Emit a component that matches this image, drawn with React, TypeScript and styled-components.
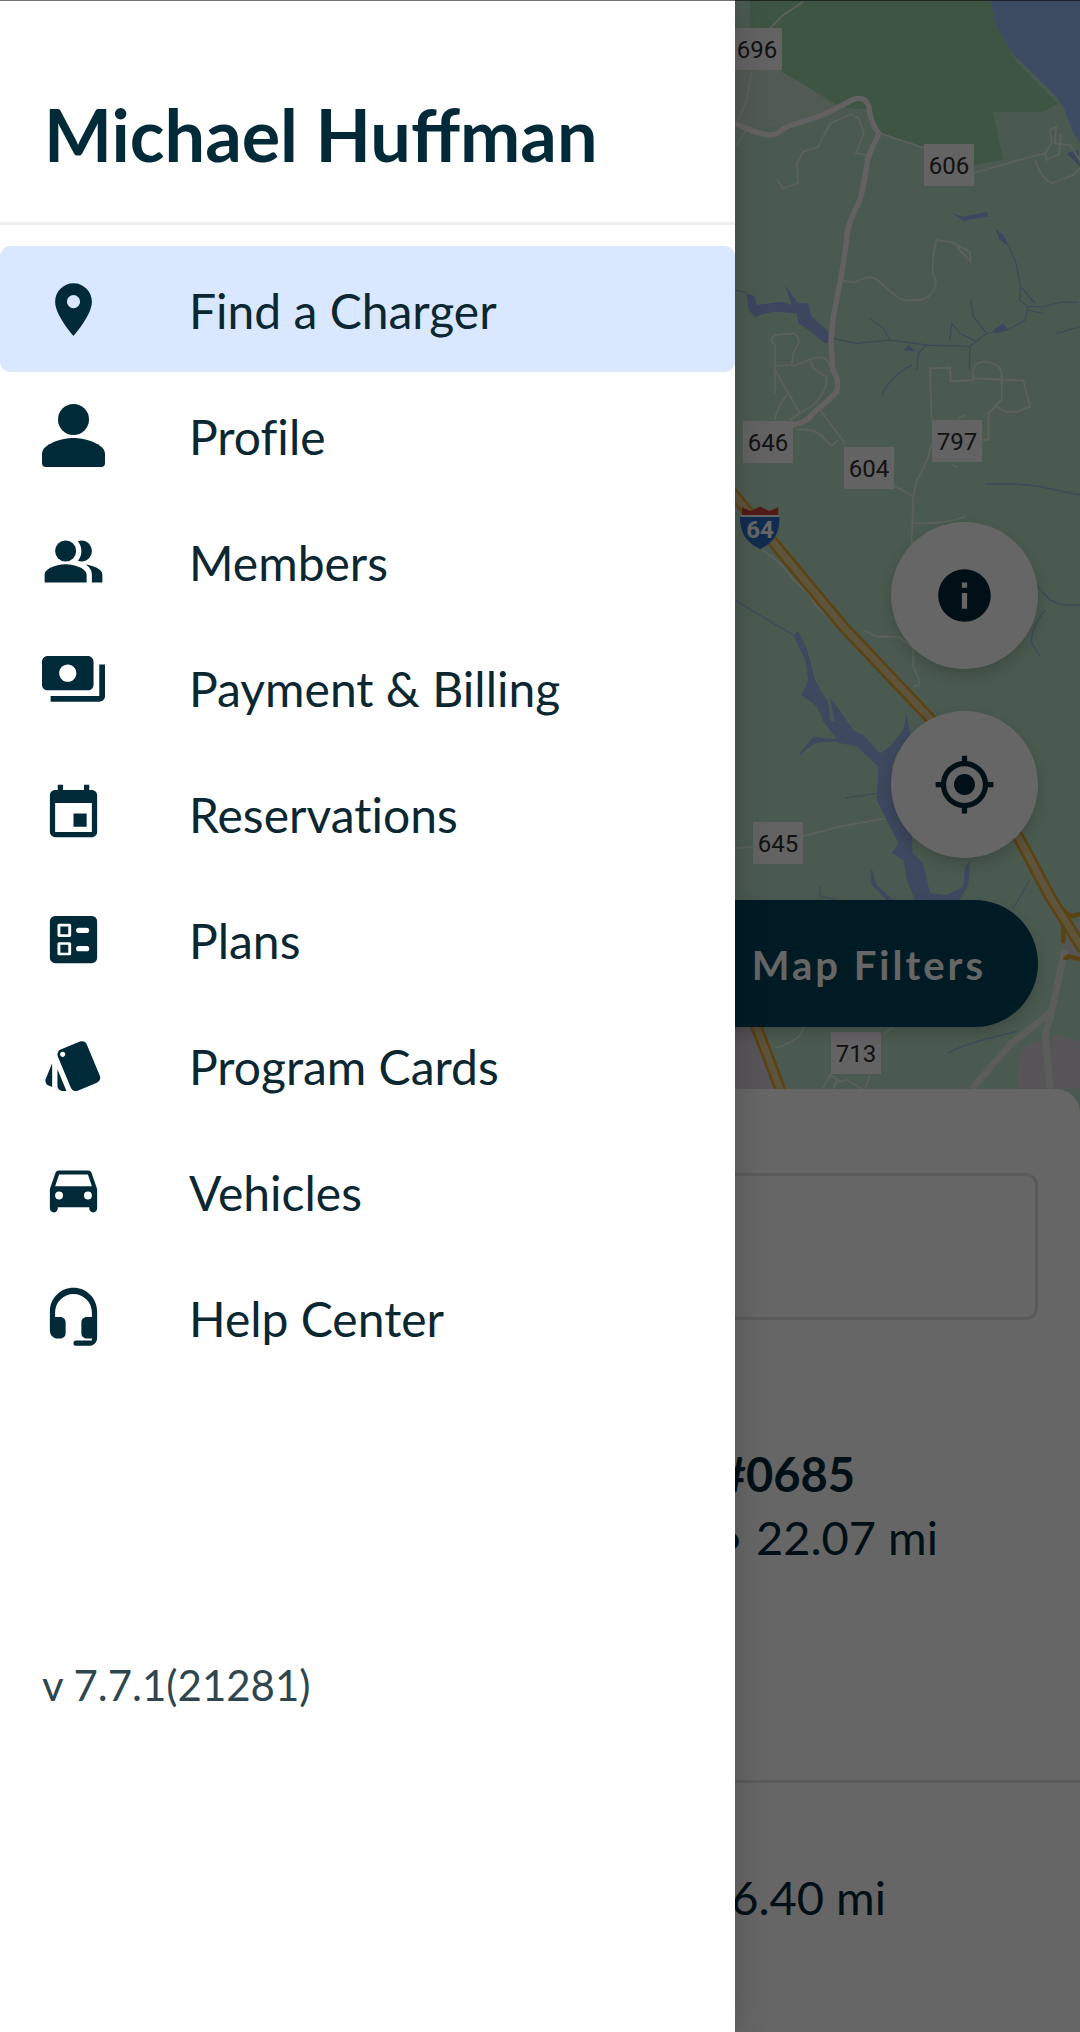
import React from "react";
import styled, { createGlobalStyle } from "styled-components";
import {
  MdEvent,
  MdInfo,
  MdMyLocation,
  MdPeopleAlt,
  MdPlace,
  MdStyle,
} from "react-icons/md";

interface menuItem {
  label: string;
  icon: React.ReactNode;
  active?: boolean;
}

interface roadLabelProps {
  x: number;
  y: number;
  text: string;
}

const PersonIcon: React.FC = () => (
  <svg viewBox="0 0 63 63" fill="currentColor">
    <circle cx="31.5" cy="15.5" r="15.5" />
    <path d="M31.5 34C21 34 0 39.5 0 50v9a4 4 0 0 0 4 4h55a4 4 0 0 0 4-4v-9c0-10.5-21-16-31.5-16z" />
  </svg>
);

const PaymentsIcon: React.FC = () => (
  <svg viewBox="1 4 22 22" fill="currentColor">
    <path d="M19 14V6c0-1.1-.9-2-2-2H3c-1.1 0-2 .9-2 2v8c0 1.1.9 2 2 2h14c1.1 0 2-.9 2-2zm-9-1c-1.66 0-3-1.34-3-3s1.34-3 3-3 3 1.34 3 3-1.34 3-3 3zm13-6v11c0 1.1-.9 2-2 2H4v-2h17V7h2z" />
  </svg>
);

const BallotIcon: React.FC = () => (
  <svg viewBox="0 0 24 24" fill="currentColor" fillRule="evenodd">
    <path d="M5 3h14a2 2 0 0 1 2 2v14a2 2 0 0 1-2 2H5a2 2 0 0 1-2-2V5a2 2 0 0 1 2-2zM14 7.500a1 1 0 0 0 0 2h3a1 1 0 0 0 0-2zM14 14.500a1 1 0 0 0 0 2h3a1 1 0 0 0 0-2zM6.500 6a.6.6 0 0 0-.6.6v3.800a.6.6 0 0 0 .6.6h4a.6.6 0 0 0 .6-.6V6.600a.6.6 0 0 0-.6-.6zM6.500 13a.6.6 0 0 0-.6.6v3.800a.6.6 0 0 0 .6.6h4a.6.6 0 0 0 .6-.6v-3.800a.6.6 0 0 0-.6-.6z" />
    <path d="M7 7h3v3H7zM7 14h3v3H7z" />
  </svg>
);

const CarIcon: React.FC = () => (
  <svg viewBox="0 0 24 24" fill="currentColor" fillRule="evenodd">
    <path d="M18.92 5.01C18.72 4.42 18.16 4 17.5 4h-11c-.66 0-1.21.42-1.42 1.01L3 11v7.5c0 .82.67 1.5 1.5 1.5S6 19.33 6 18.5V18h12v.5c0 .82.67 1.5 1.5 1.5s1.5-.68 1.5-1.5V11zM6.5 15a1.5 1.5 0 1 1 0-3 1.5 1.5 0 0 1 0 3zM17.5 15a1.5 1.5 0 1 1 0-3 1.5 1.5 0 0 1 0 3zM5 10l1.5-4.500h11L19 10z" />
  </svg>
);

const HeadsetIcon: React.FC = () => (
  <svg viewBox="0 0 24 24" fill="currentColor">
    <path d="M12 .7c-4.97 0-9 4.03-9 9V17c0 1.66 1.34 3 3 3h1c1.1 0 2-.9 2-2v-4.2c0-1.1-.9-2-2-2H5V10c0-3.870 3.130-7 7-7s7 3.130 7 7v1.8h-2c-1.1 0-2 .9-2 2V18c0 1.1.9 2 2 2h2v.8h-6a1 1 0 0 0 0 2h5c1.66 0 3-1.34 3-3V9.700c0-4.970-4.030-9-9-9z" />
  </svg>
);

const menu: menuItem[] = [
  { label: "Find a Charger", icon: <MdPlace />, active: true },
  { label: "Profile", icon: <PersonIcon /> },
  { label: "Members", icon: <MdPeopleAlt /> },
  { label: "Payment & Billing", icon: <PaymentsIcon /> },
  { label: "Reservations", icon: <MdEvent /> },
  { label: "Plans", icon: <BallotIcon /> },
  { label: "Program Cards", icon: <MdStyle /> },
  { label: "Vehicles", icon: <CarIcon /> },
  { label: "Help Center", icon: <HeadsetIcon /> },
];

const RoadLabel: React.FC<roadLabelProps> = ({ x, y, text }) => (
  <g>
    <rect x={x} y={y} width="50" height="42" fill="#fbf7fb" />
    <text
      x={x + 25}
      y={y + 30}
      textAnchor="middle"
      fontFamily="Roboto, sans-serif"
      fontSize="24"
      fill="#2e2e2e"
    >
      {text}
    </text>
  </g>
);

const AreaMap: React.FC = () => (
  <MapSvg viewBox="0 0 1080 1110" preserveAspectRatio="xMaxYMin slice">
    <rect width="1080" height="1110" fill="#bce2c8" />
    <g transform="translate(730 0) scale(.3333)" fill="none">
      {/* parks */}
      <path d="M0 100H155L240 265 320 325 200 370 60 390 0 370z" fill="#cbe2cf" />
      <path
        d="M60 0V90L155 215 240 265 330 320 420 330 447 398 580 440 700 500 820 480 790 335 940 335 985 312 860 185 800 80 780 0z"
        fill="#9ed5aa"
      />
      {/* water */}
      <path d="M780 0L800 80 850 165 960 270 1000 320 1030 400 1060 440V0z" fill="#9cbff8" />
      <path
        d="M50 880L75 890 80 915 155 905 185 915 165 855 205 910 235 910 245 950 290 990 305 1025 285 1030 235 990 205 970 200 940 130 935 75 950 55 930zM665 640L700 650 770 635 775 650 700 662zM795 685L820 705 838 740 810 720zM1010 460L1045 450 1050 500zM520 1050L538 1035 555 1055zM790 990L820 970 835 990 800 1000z"
        fill="#98b0ec"
      />
      <path
        d="M15 870L50 878M838 740L858 790 872 860 868 900 895 920 940 920 1000 905 1045 908M895 920L885 960 835 990 770 1000 730 950 722 900M872 860L915 910M890 930L940 940M770 1000L720 1040 590 1035 480 1020 380 1030 310 1015M480 1020L460 985 418 955M590 1035L565 1060 560 1110M720 1040L718 1110M660 1020L665 970 690 1000 740 1025M980 1000L1050 980"
        stroke="#9bb4d8"
        strokeWidth="4"
      />
      {/* highway 606 / 646 */}
      <path
        d="M15 370L60 390C110 410 140 410 155 390 190 365 240 365 300 335L370 298C400 290 415 300 418 330 422 360 430 380 447 400L415 470C405 520 402 560 390 600 370 640 350 680 350 720 340 800 325 880 310 950L303 1020 308 1110C325 1130 325 1160 320 1175 300 1200 270 1220 250 1240 225 1270 210 1270 180 1275"
        stroke="#f7f2f2"
        strokeWidth="16"
      />
      {/* local roads */}
      <path
        d="M220 5L160 45 120 85M65 215L50 300 25 360M45 395L20 435M410 465L378 460 402 400 385 355 365 343 300 370 265 440 220 455 200 490 205 550 158 565 142 538M450 400L585 445M730 520L850 485 945 460 965 430 960 390 978 380 975 430 1020 435 1050 480M945 460L950 480 988 462 992 402M915 480Q930 530 965 550L1030 525 1050 505M335 842L375 848Q410 825 435 835L500 890 520 900Q570 905 595 890 620 870 617 840L608 820Q607 760 620 720L665 727 720 755 722 785 680 740M135 1180V1110 1035Q115 1020 135 1005L190 1000Q210 1010 205 1030L190 1060 185 1095 135 1098M190 1098L240 1078 250 1105 290 1130Q295 1170 250 1215L210 1240 135 1110M210 1240L180 1260M245 1078Q275 1065 290 1080L305 1110"
        stroke="#e8f1e8"
        strokeWidth="5"
      />
      <path
        d="M135 1260Q140 1220 170 1185M270 1230L345 1330M200 1290Q260 1280 290 1325L305 1337 325 1320M490 1455L550 1490 545 1625 550 1640M605 1260L600 1105 660 1103 662 1145 730 1140V1110Q735 1085 765 1085 810 1090 815 1120V1200L775 1240V1320H750M730 1135L880 1142 900 1220 860 1235Q820 1240 800 1218M605 1330Q590 1400 560 1440L550 1490M545 1568Q640 1575 705 1550M95 1650Q150 1680 190 1740 240 1780 260 1820L330 1880M400 1890L440 1910H505L550 1945V2000L568 2040Q570 2060 550 2060M15 2545L70 2540M215 2510L330 2480 495 2450M685 1255L705 1245M665 1395L682 1400M135 3145Q220 3120 220 3080M490 3080L460 3105M280 3265L300 3225 330 3245 350 3240 400 3270M325 3235L310 3267M420 3225L405 3265"
        stroke="#e8f1e8"
        strokeWidth="5"
      />
      {/* creeks and reservoir */}
      <path
        d="M455 1185Q480 1130 545 1095M765 1452Q850 1448 930 1460L1050 1485M15 1800L80 1840 190 1905M920 1755L960 1800 1000 1815H1050M945 1830Q900 1890 905 1930L930 1970M655 3160Q700 3130 860 3095M850 2725L900 2640M210 2265Q250 2210 320 2220M345 2395L440 2380M440 2670L425 2610M270 2660V2690L320 2698"
        stroke="#9fbcd8"
        strokeWidth="5"
      />
      <path
        d="M190 1905L205 1895 230 1945 245 2000 255 2040 295 2110 300 2160 400 2205 450 2260 480 2240 520 2190 530 2140 545 2230 500 2260 485 2300 500 2440 545 2490 548 2560 580 2590 600 2680 650 2685 700 2660 705 2600 720 2585 715 2660 680 2710H560L530 2640 520 2580 485 2560 505 2530 480 2480 440 2400 445 2300 380 2240 330 2230 280 2165 260 2120 215 2085 235 2040 225 1980zM300 2090L370 2190 410 2220 320 2200zM205 2265L250 2210 350 2225 260 2228zM420 2610L440 2655 490 2700H470L425 2655z"
        fill="#9cb5ee"
      />
      {/* town areas */}
      <path
        d="M15 3080H60L110 3170 135 3267H15zM865 3267Q850 3170 900 3130L955 3120 980 3105 1050 3125V3267zM1000 2840L1050 2760V2880L1010 2870z"
        fill="#dcd5df"
      />
      <path
        d="M725 3267L840 3135 965 3035 1005 2850M965 3035L945 3110 962 3267"
        stroke="#e4e9e3"
        strokeWidth="20"
      />
      {/* interstate */}
      <g strokeLinejoin="round">
        <path
          d="M1050 2740Q1020 2760 1000 2730M1050 2880Q1010 2860 1005 2880M1000 2830V2770"
          stroke="#e0a836"
          strokeWidth="14"
        />
        <path
          d="M0 1470L190 1700 340 1880 600 2155 740 2310 870 2520 960 2690 1060 2850M75 3070L110 3160 155 3280"
          stroke="#e0a836"
          strokeWidth="36"
        />
        <path
          d="M0 1470L190 1700 340 1880 600 2155 740 2310 870 2520 960 2690 1060 2850M75 3070L110 3160 155 3280"
          stroke="#ecd093"
          strokeWidth="20"
        />
      </g>
      <path d="M30 1550H148Q152 1620 90 1647 28 1620 30 1550z" fill="#2f6fc9" />
      <path d="M36 1545V1522L62 1533 90 1520 118 1533 145 1522V1545z" fill="#d0443c" />
      <path d="M32 1548H147" stroke="#fff" strokeWidth="6" />
    </g>
    <text
      x="760"
      y="538"
      textAnchor="middle"
      fontFamily="Roboto, sans-serif"
      fontWeight="700"
      fontSize="24"
      fill="#fff"
    >
      64
    </text>
    <RoadLabel x={732} y={28} text="696" />
    <RoadLabel x={924} y={144} text="606" />
    <RoadLabel x={743} y={421} text="646" />
    <RoadLabel x={844} y={447} text="604" />
    <RoadLabel x={932} y={420} text="797" />
    <RoadLabel x={753} y={822} text="645" />
    <RoadLabel x={831} y={1032} text="713" />
  </MapSvg>
);

const App: React.FC = () => {
  return (
    <Screen>
      <GlobalStyle />
      <Main>
        <MapArea>
          <AreaMap />
          <RoundButton aria-label="Information">
            <MdInfo size={63} />
          </RoundButton>
          <RoundButton aria-label="My location">
            <MdMyLocation size={63} />
          </RoundButton>
          <FilterButton>Map Filters</FilterButton>
        </MapArea>
        <Sheet>
          <SearchInput type="text" aria-label="Search chargers" />
          <Station>
            <StationName>#0685</StationName>
            <Distance $end={142}>• 22.07 mi</Distance>
          </Station>
          <Station>
            <Distance $end={194}>6.40 mi</Distance>
          </Station>
        </Sheet>
      </Main>
      <Scrim />
      <Drawer>
        <DrawerHeader>
          <UserName>Michael Huffman</UserName>
        </DrawerHeader>
        <Nav>
          {menu.map((item) => (
            <NavLink href="#" key={item.label} $active={item.active}>
              <NavIcon>{item.icon}</NavIcon>
              <NavText>{item.label}</NavText>
            </NavLink>
          ))}
        </Nav>
        <Version>v 7.7.1(21281)</Version>
      </Drawer>
      <StatusEdge />
    </Screen>
  );
};

export default App;

const GlobalStyle = createGlobalStyle`
  * {
    box-sizing: border-box;
  }
  body {
    margin: 0;
    font-family: Lato, "Open Sans", sans-serif;
    color: #002a38;
  }
`;

const Screen = styled.div`
  position: relative;
  min-height: 100vh;
  overflow: hidden;
  background-color: #fff;
`;

const Main = styled.main`
  display: flex;
  flex-direction: column;
`;

const MapArea = styled.section`
  position: relative;
  display: flex;
  flex-direction: column;
  align-items: flex-end;
  gap: 42px;
  padding: 522px 42px 83px;
`;

const MapSvg = styled.svg`
  position: absolute;
  inset: 0;
  width: 100%;
  height: 100%;
`;

const RoundButton = styled.button`
  position: relative;
  display: flex;
  align-items: center;
  justify-content: center;
  width: 147px;
  height: 147px;
  padding: 0;
  border: none;
  border-radius: 50%;
  background-color: #fff;
  color: #002a38;
  box-shadow: 0 6px 16px rgba(0, 0, 0, 0.2);
`;

const FilterButton = styled.button`
  position: relative;
  height: 127px;
  padding: 2px 52px 0 126px;
  border: none;
  border-radius: 64px;
  background-color: #00445a;
  color: #fff;
  font-family: inherit;
  font-size: 40px;
  font-weight: 700;
  letter-spacing: 3px;
  box-shadow: 0 6px 16px rgba(0, 0, 0, 0.2);
`;

const Sheet = styled.section`
  position: relative;
  display: flex;
  flex-direction: column;
  margin-top: -21px;
  padding-top: 84px;
  border-radius: 24px 24px 0 0;
  background-color: #fff;
`;

const SearchInput = styled.input`
  height: 147px;
  margin: 0 42px 116px;
  padding: 0 42px;
  border: 3px solid #e2e2e2;
  border-radius: 12px;
  background-color: #fff;
  font-family: inherit;
  font-size: 47px;
`;

const Station = styled.article`
  display: flex;
  flex-direction: column;
  align-items: flex-end;
  min-height: 347px;
  border-bottom: 3px solid #e2e2e2;
  & + & {
    min-height: 249px;
    padding-top: 76px;
    border-bottom: none;
  }
`;

const StationName = styled.h2`
  margin: 0;
  padding: 13px 225px 0 0;
  font-size: 47px;
  font-weight: 700;
  line-height: 50px;
`;

const Distance = styled.p<{ $end: number }>`
  margin: 0;
  padding: 10px ${({ $end }) => $end}px 0 0;
  font-size: 47px;
  line-height: 56px;
`;

const Scrim = styled.div`
  position: absolute;
  inset: 0;
  background-color: rgba(0, 0, 0, 0.6);
`;

const Drawer = styled.aside`
  position: absolute;
  inset: 0 auto 0 0;
  width: 735px;
  max-width: 100%;
  background-color: #fff;
  box-shadow: 0 0 32px rgba(0, 0, 0, 0.2);
`;

const DrawerHeader = styled.header`
  height: 225px;
  padding: 92px 44px 0;
  border-bottom: 3px solid #efefef;
`;

const UserName = styled.h1`
  margin: 0;
  font-size: 72px;
  font-weight: 700;
  line-height: 84px;
  white-space: nowrap;
`;

const Nav = styled.nav`
  display: flex;
  flex-direction: column;
  padding-top: 21px;
`;

const NavLink = styled.a<{ $active?: boolean }>`
  display: flex;
  align-items: center;
  gap: 84px;
  height: 126px;
  padding: 0 42px;
  border-radius: 10px;
  background-color: ${({ $active }) => ($active ? "#d9e7ff" : "transparent")};
  color: #0b2732;
  text-decoration: none;
`;

const NavIcon = styled.span`
  display: flex;
  color: #002a38;
  svg {
    width: 63px;
    height: 63px;
  }
`;

const NavText = styled.span`
  padding-top: 2px;
  font-size: 48px;
  font-variant-ligatures: none;
  white-space: nowrap;
`;

const Version = styled.p`
  margin: 280px 42px 0;
  color: #2f464f;
  font-size: 42px;
  line-height: 50px;
`;

// thin shade under the system status bar
const StatusEdge = styled.div`
  position: absolute;
  inset: 0 0 auto;
  height: 1px;
  background-color: rgba(0, 0, 0, 0.55);
`;
